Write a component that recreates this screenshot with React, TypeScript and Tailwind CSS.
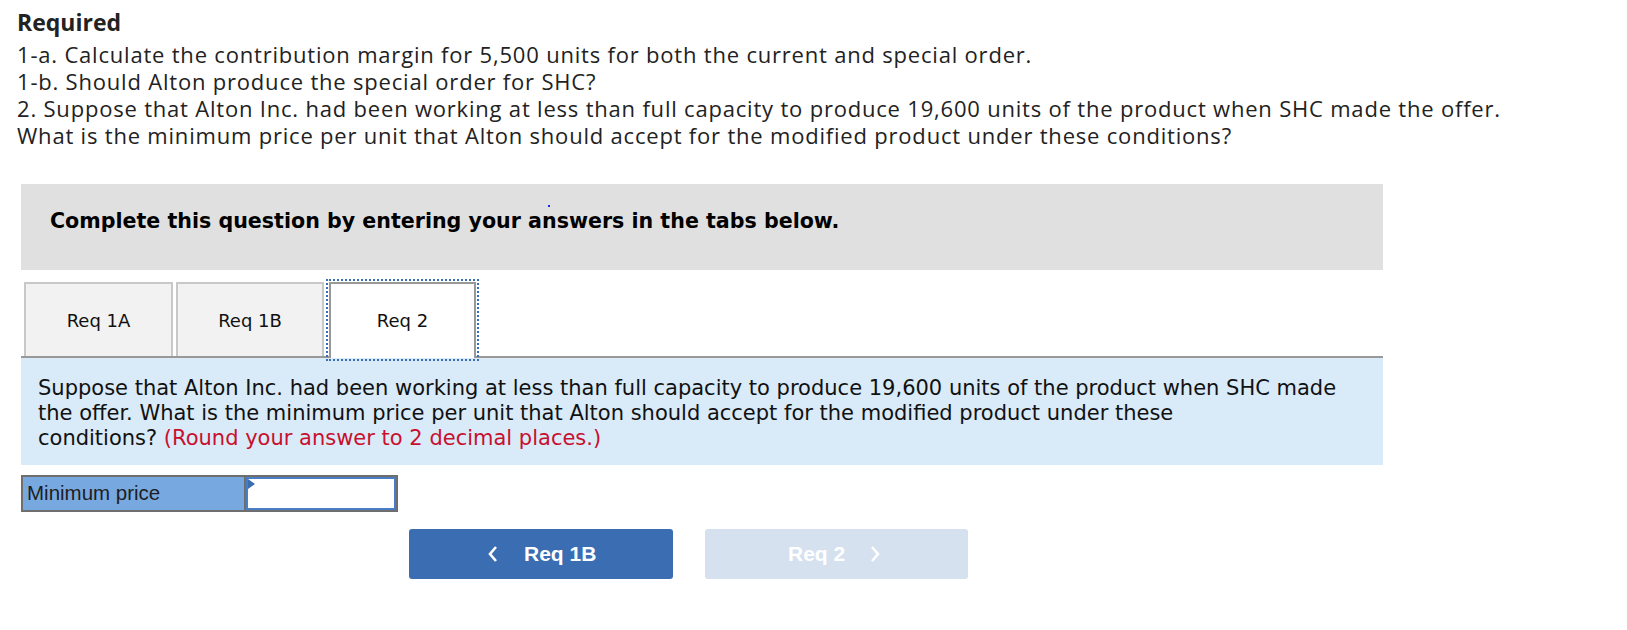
import React from "react";

function ChevronLeft() {
  return (
    <svg width="12" height="20" viewBox="0 0 12 20" className="block">
      <polyline points="9,3 3,10 9,17" fill="none" stroke="white" strokeWidth="2.6" />
    </svg>
  );
}
function ChevronRight() {
  return (
    <svg width="12" height="20" viewBox="0 0 12 20" className="block">
      <polyline points="3,3 9,10 3,17" fill="none" stroke="white" strokeWidth="2.6" />
    </svg>
  );
}

export default function App() {
  return (
    <div className="w-[1627px] h-[630px] bg-white text-[#1a1a1a] relative">
      <div className="pl-[17px] pt-[9px] font-['Open_Sans',sans-serif] text-[22px] tracking-[0.8px] leading-[27px] text-[#222]">
        <div className="font-bold text-[23px] tracking-normal mb-[5px]">Required</div>
        <div>1-a. Calculate the contribution margin for 5,500 units for both the current and special order.</div>
        <div>1-b. Should Alton produce the special order for SHC?</div>
        <div>
          2. Suppose that Alton Inc. had been working at less than full capacity to produce 19,600 units of the product when SHC made the offer.
          <br />
          What is the minimum price per unit that Alton should accept for the modified product under these conditions?
        </div>
      </div>

      <div className="ml-[21px] w-[1362px] mt-[35px]">
        <div className="h-[86px] bg-[#e0e0e0] flex items-center pl-[29px] pb-[12px] relative">
          <span className="font-['DejaVu_Sans',sans-serif] font-bold text-[20.6px] text-black">
            Complete this question by entering your answers in the tabs below.
          </span>
          <span className="absolute left-[527px] top-[21px] w-[2px] h-[2px] bg-[#1a2ee0]" />
        </div>

        <div className="mt-[12px] flex items-end pl-[3px] h-[76px] border-b-2 border-[#999] font-['DejaVu_Sans',sans-serif] text-[18px] text-[#111]">
          <div className="w-[149px] h-[74px] border-2 border-b-0 border-[#c8c8c8] bg-[#f2f2f2] flex items-center justify-center">
            Req 1A
          </div>
          <div className="ml-[3px] w-[148px] h-[74px] border-2 border-b-0 border-[#c8c8c8] bg-[#f2f2f2] flex items-center justify-center">
            Req 1B
          </div>
          <div className="ml-[5px] w-[147px] h-[76px] -mb-[2px] relative z-10 border-2 border-b-0 border-[#999] bg-white flex items-center justify-center outline-2 outline-dotted outline-[#3b6db3] outline-offset-[1px] pb-[2px]">
            Req 2
          </div>
        </div>

        <div className="h-[107px] bg-[#d9eaf8] pl-[17px] pt-[18px] font-['DejaVu_Sans',sans-serif] text-[21px] leading-[25px] text-[#111] whitespace-nowrap">
          Suppose that Alton Inc. had been working at less than full capacity to produce 19,600 units of the product when SHC made
          <br />
          the offer. What is the minimum price per unit that Alton should accept for the modified product under these
          <br />
          conditions? <span className="text-[#c8102e]">(Round your answer to 2 decimal places.)</span>
        </div>

        <div className="mt-[10px] flex h-[37px] w-[377px] border-2 border-[#6e6e6e] font-['Liberation_Sans',sans-serif]">
          <div className="w-[223px] bg-[#78a8e0] border-r-2 border-[#6e6e6e] flex items-center pl-[4px] text-[20.5px] text-[#1e1e1e]">
            Minimum price
          </div>
          <div className="flex-1 bg-white border-2 border-[#4a7ec4] relative">
            <span className="absolute left-0 top-0 w-0 h-0 border-t-[5px] border-b-[5px] border-l-[7px] border-t-transparent border-b-transparent border-l-[#3b6db3]" />
          </div>
        </div>

        <div className="mt-[17px] flex font-['Liberation_Sans',sans-serif] font-bold text-[21px] text-white">
          <div className="ml-[388px] w-[264px] h-[50px] rounded-[3px] bg-[#3b6db3] flex items-center">
            <span className="ml-[78px]"><ChevronLeft /></span>
            <span className="ml-[25px]">Req 1B</span>
          </div>
          <div className="ml-[32px] w-[263px] h-[50px] rounded-[3px] bg-[#d5e1ef] flex items-center">
            <span className="ml-[83px]">Req 2</span>
            <span className="ml-[24px]"><ChevronRight /></span>
          </div>
        </div>
      </div>
    </div>
  );
}
